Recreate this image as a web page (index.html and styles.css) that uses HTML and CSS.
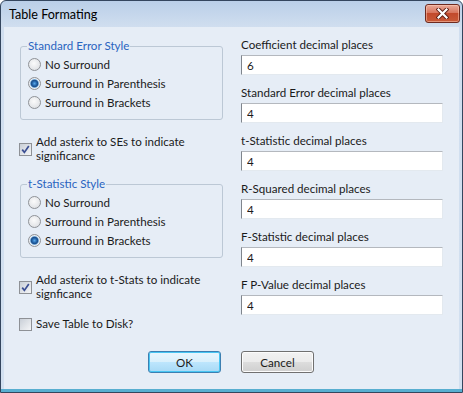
FILE: index.html
```html
<!DOCTYPE html>
<html lang="en">

<head>
    <meta charset="UTF-8">
    <title>Table Formating</title>
    <link rel="stylesheet" href="styles.css">
</head>

<body>
    <div class="window">
        <div class="titlebar">
            <span class="title">Table Formating</span>
            <button class="close" type="button">
                <svg width="13" height="11" viewBox="0 0 13 11">
                    <path d="M2.5 1.5 L10.5 9.5 M10.5 1.5 L2.5 9.5" stroke="#5b1d12" stroke-width="4" stroke-linecap="square" />
                    <path d="M2.5 1.5 L10.5 9.5 M10.5 1.5 L2.5 9.5" stroke="#fff" stroke-width="2.2" stroke-linecap="square" />
                </svg>
            </button>
        </div>

        <div class="client">
            <div class="columns">
                <div class="left">
                    <fieldset class="group">
                        <legend>Standard Error Style</legend>
                        <label class="option"><span class="radio"></span>No Surround</label>
                        <label class="option"><span class="radio on"></span>Surround in Parenthesis</label>
                        <label class="option"><span class="radio"></span>Surround in Brackets</label>
                    </fieldset>

                    <label class="checkrow first"><span class="check on"><svg width="11" height="11" viewBox="0 0 11 11"><path d="M2.2 5.6 L4.4 8.4 L8.8 2" fill="none" stroke="#3b4f93" stroke-width="1.7" /></svg></span><span>Add asterix to SEs to indicate<br>significance</span></label>

                    <fieldset class="group second">
                        <legend>t-Statistic Style</legend>
                        <label class="option"><span class="radio"></span>No Surround</label>
                        <label class="option"><span class="radio"></span>Surround in Parenthesis</label>
                        <label class="option"><span class="radio on"></span>Surround in Brackets</label>
                    </fieldset>

                    <label class="checkrow first"><span class="check on"><svg width="11" height="11" viewBox="0 0 11 11"><path d="M2.2 5.6 L4.4 8.4 L8.8 2" fill="none" stroke="#3b4f93" stroke-width="1.7" /></svg></span><span>Add asterix to t-Stats to indicate<br>signficance</span></label>

                    <label class="checkrow save"><span class="check"></span><span>Save Table to Disk?</span></label>
                </div>

                <div class="right">
                    <div class="field">
                        <label for="coef">Coefficient decimal places</label>
                        <input type="text" id="coef" value="6">
                    </div>
                    <div class="field">
                        <label for="se">Standard Error decimal places</label>
                        <input type="text" id="se" value="4">
                    </div>
                    <div class="field">
                        <label for="tstat">t-Statistic decimal places</label>
                        <input type="text" id="tstat" value="4">
                    </div>
                    <div class="field">
                        <label for="rsq">R-Squared decimal places</label>
                        <input type="text" id="rsq" value="4">
                    </div>
                    <div class="field">
                        <label for="fstat">F-Statistic decimal places</label>
                        <input type="text" id="fstat" value="4">
                    </div>
                    <div class="field">
                        <label for="fpval">F P-Value decimal places</label>
                        <input type="text" id="fpval" value="4">
                    </div>
                </div>
            </div>

            <div class="buttons">
                <button type="button" class="btn default">OK</button>
                <button type="button" class="btn">Cancel</button>
            </div>
        </div>
    </div>
</body>

</html>
```

FILE: styles.css
```css
body {
    margin: 0;
    font-family: Lato, "Liberation Sans", sans-serif;
    font-size: 11.6px;
    color: #1a1a1a;
    background-color: #fff;
}

.window {
    width: 463px;
    height: 393px;
    box-sizing: border-box;
    border: 1px solid #34465e;
    border-radius: 6px 6px 0 0;
    background: linear-gradient(#bacfe8, #d0deef 26px, #d2e0f0 calc(100% - 3px), #58aed0 calc(100% - 3px));
    display: flex;
    flex-direction: column;
}

.titlebar {
    height: 26px;
    display: flex;
    justify-content: space-between;
    align-items: flex-start;
    padding: 0 2px 0 8px;
}

.title {
    font-size: 12.6px;
    line-height: 27px;
    color: #000;
}

.close {
    margin-top: 3px;
    width: 35px;
    height: 19px;
    padding: 0;
    border: 1px solid #6e2a1f;
    border-radius: 3px;
    background: linear-gradient(#e9a998, #d8765e 45%, #c24a2c 50%, #c95a38);
    box-shadow: inset 0 0 0 1px rgba(255, 210, 190, 0.5);
    display: flex;
    align-items: center;
    justify-content: center;
}

.client {
    flex: 1;
    margin: 0 3px 3px;
    background-color: #e6edf6;
    padding: 11px 16px 0 15px;
}

.columns {
    display: flex;
    gap: 18px;
}

.left {
    width: 204px;
    display: flex;
    flex-direction: column;
}

.group {
    margin: 0 0 0 1px;
    padding: 1px 0 7px 7px;
    border: 1px solid #bcc8d5;
    border-radius: 3px;
    min-width: 0;
}

.group legend {
    padding: 0 1px;
    margin-left: -1px;
    line-height: 16px;
    color: #2a64c0;
}

.group.second {
    margin-top: 13px;
}

.option {
    display: flex;
    align-items: center;
    gap: 4px;
    height: 19px;
}

.radio {
    width: 13px;
    height: 13px;
    box-sizing: border-box;
    border-radius: 50%;
    border: 1px solid #8f9297;
    background: radial-gradient(circle at 45% 40%, #fbfbfb, #e2e4e7 70%, #d0d3d8);
}

.radio.on {
    background: radial-gradient(circle at 50% 50%, #5aa8e6 0, #2466ad 2.2px, #1b4c86 3.4px, #8dbde6 4.2px, #eef0f3 4.8px, #d5d8dc 100%);
}

.checkrow {
    display: flex;
    align-items: center;
    gap: 4px;
    line-height: 14px;
}

.checkrow.first {
    margin-top: 15px;
}

.checkrow.save {
    margin-top: 16px;
}

.check {
    flex: none;
    width: 13px;
    height: 13px;
    box-sizing: border-box;
    border: 1px solid #8e9196;
    background: linear-gradient(135deg, #c9cfd7, #f4f5f7);
    display: flex;
    align-items: center;
    justify-content: center;
}

.right {
    width: 202px;
}

.field {
    margin-bottom: 11px;
}

.field label {
    display: block;
    line-height: 14px;
}

.field input {
    display: block;
    width: 100%;
    height: 20px;
    margin-top: 3px;
    box-sizing: border-box;
    padding: 0 0 0 5px;
    border: 1px solid;
    border-color: #b4b8be #e3e9ef #e3e9ef #7f858d;
    background-color: white;
    font-family: inherit;
    font-size: 11.6px;
    color: #1a1a1a;
}

.buttons {
    margin-top: 20px;
    display: flex;
    justify-content: center;
    gap: 20px;
}

.btn {
    width: 73px;
    height: 22px;
    padding: 0;
    border: 1px solid #707070;
    border-radius: 3px;
    background: linear-gradient(#f2f2f2, #ebebeb 50%, #dddddd 50%, #cfcfcf);
    box-shadow: inset 0 0 0 1px #fcfcfc;
    font-family: inherit;
    font-size: 11.6px;
    color: #1a1a1a;
}

.btn.default {
    border-color: #3c7fb1;
    background: linear-gradient(#eaf6fd, #d9f0fc 50%, #bee6fd 50%, #a7d9f5);
    box-shadow: inset 0 0 0 1px #48c6f3;
}
```
